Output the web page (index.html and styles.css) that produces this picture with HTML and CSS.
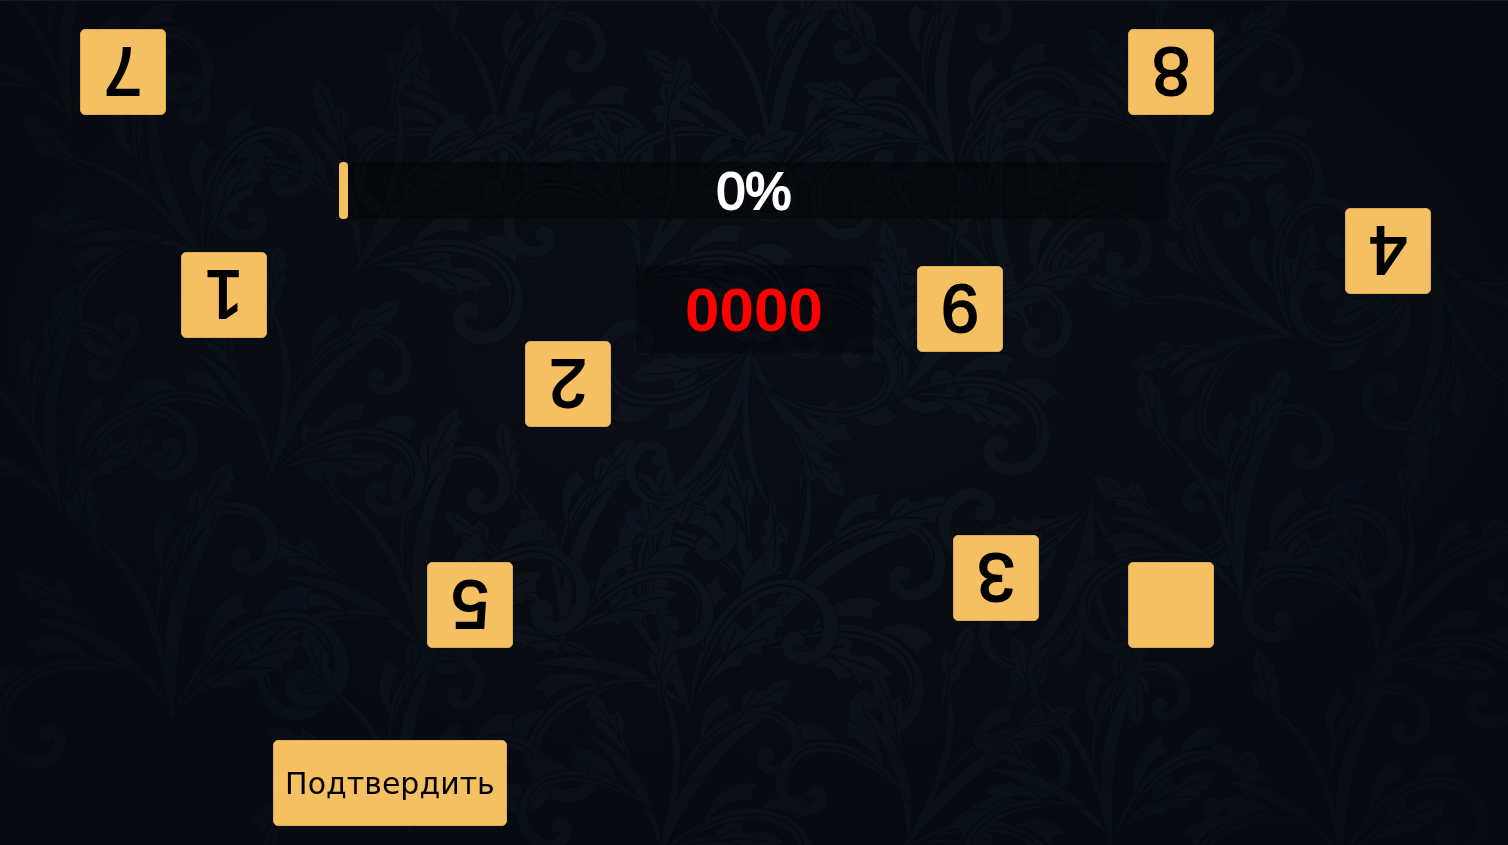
FILE: index.html
```html
<!DOCTYPE html>
<html lang="ru">
<head>
<meta charset="utf-8">
<meta name="viewport" content="width=device-width, initial-scale=1">
<title>Код</title>
<link rel="stylesheet" href="styles.css">
</head>
<body>
<svg class="wallpaper" viewBox="0 0 1508 845" preserveAspectRatio="xMidYMid slice" aria-hidden="true">
  <defs>
    <radialGradient id="glow" cx="50%" cy="40%" r="62%">
      <stop offset="0" stop-color="#0a0f15"/>
      <stop offset="1" stop-color="#070b11"/>
    </radialGradient>
    <radialGradient id="fade" gradientUnits="userSpaceOnUse" cx="754" cy="330" r="850">
      <stop offset="0" stop-color="#fff"/>
      <stop offset="1" stop-color="#555"/>
    </radialGradient>
    <mask id="edges" maskUnits="userSpaceOnUse" x="0" y="0" width="1508" height="845"><rect width="1508" height="845" fill="url(#fade)"/></mask>
    <g id="leaf">
      <path d="M0 0C10-18 20-34 38-44C32-56 44-70 58-74C56-66 62-62 68-66C76-80 94-84 108-78C100-74 98-66 102-60C92-62 88-56 92-48C82-52 74-46 76-36C64-42 54-38 54-28C38-34 16-18 0 0Z"/>
      <path class="vein" d="M4-4C28-34 56-56 94-72M34-35C42-46 48-56 54-64M48-46C60-50 70-50 82-52"/>
    </g>
    <g id="curl">
      <path d="M0 0C24-46 72-84 122-70C164-58 170-4 134 10C110 18 92-2 102-18C108-28 124-24 122-12C121-6 115-5 112-8C114 2 130 2 138-10C150-30 138-56 112-60C72-66 28-34 0 0Z"/>
      <path d="M40-44C38-70 58-98 86-96C78-90 80-82 86-78C68-78 50-66 40-44ZM92-72C102-92 126-98 142-86C132-84 130-76 136-68C120-76 106-76 92-72Z"/>
      <path class="vein" d="M8-9C40-50 78-72 116-66C142-60 152-34 140-10"/>
    </g>
    <g id="spray">
      <path d="M0 0C6-60 2-120-34-176C-12-154 10-116 8-60C20-110 46-150 90-172C54-138 24-92 4 0Z"/>
      <path d="M2-20C-16-70-50-104-98-112C-58-88-24-60 2-12Z"/>
      <use href="#curl"/>
      <use href="#curl" transform="translate(-2 -40) rotate(-22) scale(-.9 .9)"/>
      <use href="#curl" transform="translate(6 -76) rotate(-24) scale(.84)"/>
      <use href="#leaf" transform="translate(-20 -140) rotate(-62) scale(.72)"/>
      <use href="#leaf" transform="translate(36 -124) rotate(-16) scale(.76)"/>
      <use href="#leaf" transform="translate(-40 -80) rotate(12) scale(-.7 .7)"/>
      <use href="#leaf" transform="translate(8 -10) rotate(20) scale(.9)"/>
    </g>
  </defs>
  <rect width="1508" height="845" fill="url(#glow)"/>
  <g class="ornament" mask="url(#edges)">
    <use href="#spray" transform="translate(500 190) rotate(-6)"/>
    <use href="#spray" transform="translate(770 190) rotate(-8) scale(1.05)"/>
    <use href="#spray" transform="translate(955 180) rotate(-24)"/>
    <use href="#spray" transform="translate(1165 190) rotate(8)"/>
    <use href="#spray" transform="translate(350 275) rotate(24) scale(1.1)"/>
    <use href="#spray" transform="translate(205 265) rotate(-42)"/>
    <use href="#spray" transform="translate(632 285) rotate(22)"/>
    <use href="#spray" transform="translate(1030 335) rotate(-34)"/>
    <use href="#spray" transform="translate(1300 345) rotate(-64) scale(.95)"/>
    <use href="#spray" transform="translate(1430 240) rotate(160)"/>
    <use href="#spray" transform="translate(745 655) rotate(28) scale(1.15)"/>
    <use href="#spray" transform="translate(690 720) rotate(-30) scale(1.15)"/>
    <use href="#spray" transform="translate(560 650) rotate(-6)"/>
    <use href="#spray" transform="translate(425 665) rotate(-18) scale(1.15)"/>
    <use href="#spray" transform="translate(895 400) rotate(30)"/>
    <use href="#spray" transform="translate(755 340) rotate(184)"/>
    <use href="#spray" transform="translate(1095 495) rotate(178)"/>
    <use href="#spray" transform="translate(1240 610) rotate(-14) scale(1.1)"/>
    <use href="#spray" transform="translate(1370 670) rotate(22)"/>
    <use href="#spray" transform="translate(170 725) rotate(-12) scale(1.2)"/>
    <use href="#spray" transform="translate(60 515) rotate(-22)"/>
    <use href="#spray" transform="translate(265 480) rotate(12)"/>
    <use href="#spray" transform="translate(410 840) rotate(-18)"/>
    <use href="#spray" transform="translate(655 860) rotate(12)"/>
    <use href="#spray" transform="translate(900 850) rotate(26)"/>
    <use href="#spray" transform="translate(1110 850) rotate(-16)"/>
    <use href="#spray" transform="translate(1340 870) rotate(-12)"/>
    <use href="#spray" transform="translate(70 130) rotate(-18)"/>
  </g>
</svg>

<main class="screen">
  <div class="progress" role="progressbar" aria-label="Прогресс" aria-valuemin="0" aria-valuemax="100" aria-valuenow="0">
    <span class="progress-fill"></span>
    <span>0%</span>
  </div>
  <output class="code" aria-label="Код">0000</output>
  <button class="key confirm" type="button">Подтвердить</button>

  <button class="key tile tile-7" type="button">7</button>
  <button class="key tile tile-8" type="button">8</button>
  <button class="key tile tile-4" type="button">4</button>
  <button class="key tile tile-1" type="button">1</button>
  <button class="key tile tile-9" type="button">9</button>
  <button class="key tile tile-2" type="button">2</button>
  <button class="key tile tile-5" type="button">5</button>
  <button class="key tile tile-3" type="button">3</button>
  <button class="key tile tile-blank" type="button" aria-label="Пусто"></button>
</main>
</body>
</html>
```
FILE: styles.css
```css
* { box-sizing: border-box; }

body {
  margin: 0;
  background: #070b11;
  color: #fff;
  font-family: "Liberation Sans", Arial, sans-serif;
}

.wallpaper {
  position: absolute;
  inset: 0;
  width: 100%;
  height: 100%;
}

.ornament { fill: #10161f; stroke: #080c12; stroke-width: 1; opacity: .85; }
.vein { fill: none; stroke: #080c12; stroke-width: 2; }

.screen {
  position: relative;
  display: flex;
  flex-direction: column;
  align-items: center;
  min-height: 100vh;
  padding: 161px 0 19px;
  border-top: 1px solid #191919;
  overflow: hidden;
}

.progress {
  position: relative;
  display: flex;
  align-items: center;
  justify-content: center;
  width: 55%;
  height: 57px;
  background: linear-gradient(90deg, rgba(0, 0, 0, .4) 90%, rgba(0, 0, 0, .25));
  font-size: 52px;
  line-height: 56px;
  -webkit-text-stroke: 2px #fff;
}

.progress-fill {
  position: absolute;
  top: 0;
  left: 0;
  width: 9px;
  height: 100%;
  border-radius: 4px;
  background: #f5c061;
}

.code {
  display: flex;
  align-items: center;
  justify-content: center;
  min-width: 237px;
  height: 88px;
  margin-top: 46px;
  background: rgba(0, 0, 0, .3);
  color: #f00;
  font-size: 62px;
  font-weight: 700;
}

.key {
  padding: 0;
  border: 1px solid #d9aa57;
  border-radius: 5px;
  background: #f5c061;
  color: #000;
  font-family: inherit;
  cursor: pointer;
}

.confirm {
  align-self: flex-start;
  width: 234px;
  height: 86px;
  margin-top: auto;
  margin-left: 18.1%;
  font-family: "DejaVu Sans", sans-serif;
  font-size: 30px;
}

.tile {
  position: absolute;
  width: 86px;
  height: 86px;
  font-size: 68px;
  line-height: 84px;
  transform: rotate(180deg);
  -webkit-text-stroke: 2px #000;
}

.tile-7 { left: 5.3%; top: 3.3%; }
.tile-8 { left: 74.8%; top: 3.3%; }
.tile-4 { left: 89.2%; top: 24.5%; }
.tile-1 { left: 12%; top: 29.7%; }
.tile-9 { left: 60.8%; top: 31.4%; }
.tile-2 { left: 34.8%; top: 40.3%; }
.tile-5 { left: 28.3%; top: 66.5%; }
.tile-3 { left: 63.2%; top: 63.3%; }
.tile-blank { left: 74.8%; top: 66.5%; }
```
